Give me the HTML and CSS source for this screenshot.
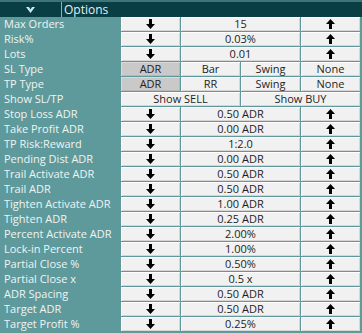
FILE: index.html
```html
<!DOCTYPE html>
<html>
<head>
    <title>Options</title>
    <meta charset="UTF-8">
    <link rel="stylesheet" href="styles.css">
</head>
<body>
    <div class="panel">
        <div class="header">
            <div class="toggle">
                <svg width="9" height="6" viewBox="0 0 9 6"><polygon points="0,0 3,0 4.5,2.6 6,0 9,0 4.5,6" fill="#cfe4ee"/></svg>
            </div>
            <div class="title">Options</div>
        </div>

        <div class="grid">
            <div class="label">Max Orders</div>
            <div class="cell btn dn"></div><div class="cell val">15</div><div class="cell btn up"></div>

            <div class="label">Risk%</div>
            <div class="cell btn dn"></div><div class="cell val">0.03%</div><div class="cell btn up"></div>

            <div class="label">Lots</div>
            <div class="cell btn dn"></div><div class="cell val">0.01</div><div class="cell btn up"></div>

            <div class="label">SL Type</div>
            <div class="cell sel">ADR</div><div class="cell">Bar</div><div class="cell">Swing</div><div class="cell">None</div>

            <div class="label">TP Type</div>
            <div class="cell sel">ADR</div><div class="cell">RR</div><div class="cell">Swing</div><div class="cell">None</div>

            <div class="label">Show SL/TP</div>
            <div class="cell half">Show SELL</div><div class="cell half">Show BUY</div>

            <div class="label">Stop Loss ADR</div>
            <div class="cell btn dn"></div><div class="cell val">0.50 ADR</div><div class="cell btn up"></div>

            <div class="label">Take Profit ADR</div>
            <div class="cell btn dn"></div><div class="cell val">0.00 ADR</div><div class="cell btn up"></div>

            <div class="label">TP Risk:Reward</div>
            <div class="cell btn dn"></div><div class="cell val">1:2.0</div><div class="cell btn up"></div>

            <div class="label">Pending Dist ADR</div>
            <div class="cell btn dn"></div><div class="cell val">0.00 ADR</div><div class="cell btn up"></div>

            <div class="label">Trail Activate ADR</div>
            <div class="cell btn dn"></div><div class="cell val">0.50 ADR</div><div class="cell btn up"></div>

            <div class="label">Trail ADR</div>
            <div class="cell btn dn"></div><div class="cell val">0.50 ADR</div><div class="cell btn up"></div>

            <div class="label">Tighten Activate ADR</div>
            <div class="cell btn dn"></div><div class="cell val">1.00 ADR</div><div class="cell btn up"></div>

            <div class="label">Tighten ADR</div>
            <div class="cell btn dn"></div><div class="cell val">0.25 ADR</div><div class="cell btn up"></div>

            <div class="label">Percent Activate ADR</div>
            <div class="cell btn dn"></div><div class="cell val">2.00%</div><div class="cell btn up"></div>

            <div class="label">Lock-in Percent</div>
            <div class="cell btn dn"></div><div class="cell val">1.00%</div><div class="cell btn up"></div>

            <div class="label">Partial Close %</div>
            <div class="cell btn dn"></div><div class="cell val">0.50%</div><div class="cell btn up"></div>

            <div class="label">Partial Close x</div>
            <div class="cell btn dn"></div><div class="cell val">0.5 x</div><div class="cell btn up"></div>

            <div class="label">ADR Spacing</div>
            <div class="cell btn dn"></div><div class="cell val">0.50 ADR</div><div class="cell btn up"></div>

            <div class="label">Target ADR</div>
            <div class="cell btn dn"></div><div class="cell val">0.50 ADR</div><div class="cell btn up"></div>

            <div class="label">Target Profit %</div>
            <div class="cell btn dn"></div><div class="cell val">0.25%</div><div class="cell btn up"></div>
        </div>
    </div>
</body>
</html>
```

FILE: styles.css
```css
body { margin: 0; background: #5e9a9b; font-family: "Open Sans", "Noto Sans", sans-serif; font-size: 11px; }
.panel { width: 362px; }

.header {
    display: flex;
    height: 15px;
    border-top: 2px solid #3f7478;
    background: #093e45;
    color: #e6f0f2;
}
.toggle {
    width: 61px;
    border-right: 1px solid #8fb4b8;
    display: flex;
    align-items: center;
    justify-content: center;
}
.title { padding-left: 2px; line-height: 15px; font-size: 12px; }

.grid {
    display: grid;
    grid-template-columns: 120px repeat(4, 59px);
    grid-auto-rows: 14px;
    gap: 1px;
    padding: 0 1px 1px 0;
}
.label { color: #eef4f4; line-height: 14px; padding-left: 4px; white-space: nowrap; }
.cell {
    background: #f1f1f1;
    color: #1e1e1e;
    text-align: center;
    line-height: 14px;
    box-shadow: inset 1px 1px 0 #ffffff, inset -1px -1px 0 #d6d6d6;
}
.val { grid-column: span 2; }
.half { grid-column: span 2; }
.sel { background: #c9c9c9; box-shadow: inset 1px 1px 0 #dadada, inset -1px -1px 0 #b8b8b8; }

.btn { background-repeat: no-repeat; background-position: center; }
.dn { background-image: url("data:image/svg+xml,%3Csvg xmlns='http://www.w3.org/2000/svg' width='9' height='10' viewBox='0 0 9 10'%3E%3Cpath d='M3 0h3v5h3L4.5 10 0 5h3z' fill='%23000'/%3E%3C/svg%3E"); }
.up { background-image: url("data:image/svg+xml,%3Csvg xmlns='http://www.w3.org/2000/svg' width='9' height='10' viewBox='0 0 9 10'%3E%3Cpath d='M4.5 0L9 5H6v5H3V5H0z' fill='%23000'/%3E%3C/svg%3E"); }
```
